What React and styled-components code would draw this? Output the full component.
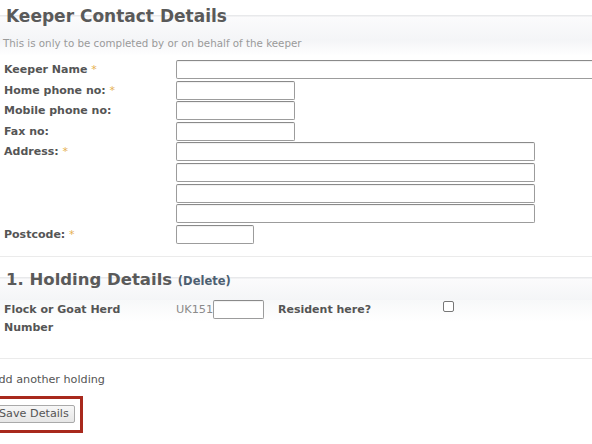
import React from 'react'
import styled, { createGlobalStyle } from 'styled-components'

const GlobalStyle = createGlobalStyle`
  html, body {
    margin: 0;
    padding: 0;
    background: #fff;
    overflow: hidden;
  }
  body {
    font-family: "DejaVu Sans", Verdana, sans-serif;
    color: #555;
  }
`

const Page = styled.div`
  width: 592px;
  height: 444px;
  overflow: hidden;
`

const SectionHead = styled.div`
  padding: 4px 0 0 0;
  height: 56px;
  box-sizing: border-box;
  background: linear-gradient(
    to bottom,
    #fff 0,
    #fff 15px,
    #e8e9eb 15px,
    #e8e9eb 16px,
    #fbfbfc 17px,
    #f4f5f7 40px,
    #fff 56px
  );
`

const Title = styled.h2`
  margin: 0 0 0 6px;
  font-size: ${(p) => p.$size || 17}px;
  line-height: 24px;
  font-weight: bold;
  color: #5a5a5a;
  span.small {
    font-size: 11.5px;
    color: #4d5f72;
  }
`

const Note = styled.p`
  margin: 8px 0 0 3px;
  font-size: 10.3px;
  line-height: 14px;
  color: #9a9a9a;
`

const Form = styled.div`
  display: grid;
  grid-template-columns: 176px 1fr;
  row-gap: 1.6px;
  margin-top: 4px;
`

const Label = styled.label`
  padding-left: 4px;
  font-size: 11px;
  line-height: 19px;
  font-weight: bold;
  color: #555;
`

const Req = styled.span`
  color: #e6b04f;
  font-weight: normal;
`

const Stack = styled.div`
  display: flex;
  flex-direction: column;
  gap: 1.6px;
`

const Input = styled.input`
  box-sizing: border-box;
  display: block;
  width: ${(p) => p.$w}px;
  height: 19px;
  margin: 0;
  padding: 1px 3px;
  border: 1px solid #9c9c9c;
  border-top-color: #8a8a8a;
  border-radius: 2px;
  background: #fff;
  box-shadow: inset 0 1px 1px rgba(0, 0, 0, 0.06);
  font-family: inherit;
  font-size: 11px;
`

const Divider = styled.div`
  height: 1px;
  background: #ebebeb;
  margin: ${(p) => p.$m};
`

const HoldingHead = styled.div`
  height: 32px;
  background: linear-gradient(
    to bottom,
    #fff 0,
    #fff 9px,
    #e8e9eb 9px,
    #e8e9eb 10px,
    #fbfbfc 11px,
    #f4f5f7 32px
  );
`

const HoldingRow = styled.div`
  display: grid;
  grid-template-columns: 176px 98px 169px 20px;
  align-items: start;
  height: 58px;
  background: linear-gradient(to bottom, #f7f8f9 0, #fff 22px);
`

const WrapLabel = styled(Label)`
  line-height: 18px;
  padding-top: 1px;
  width: 140px;
`

const Prefix = styled.div`
  display: flex;
  align-items: center;
  font-size: 11.3px;
  color: #8a8a8a;
`

const Checkbox = styled.span`
  display: block;
  width: 11px;
  height: 11px;
  margin-top: 1px;
  box-sizing: border-box;
  border: 1px solid #777;
  border-radius: 2px;
  background: #fff;
`

const AddLink = styled.a`
  display: block;
  margin: 14px 0 0 -9px;
  font-size: 11.2px;
  line-height: 14px;
  color: #555;
  text-decoration: none;
`

const Highlight = styled.div`
  display: inline-block;
  margin: 9px 0 0 -15px;
  padding: 6px 5px 7px 5px;
  border: 3px solid #a8291d;
`

const Button = styled.button`
  display: block;
  height: 18px;
  margin: 0;
  padding: 0 5px;
  border: 1px solid #a9a9a9;
  border-radius: 2px;
  background: linear-gradient(to bottom, #f7f7f7, #e6e6e6);
  font-family: inherit;
  font-size: 11.2px;
  color: #555;
`

const Star = () => <Req>*</Req>

export default function App() {
  return (
    <Page>
      <GlobalStyle />
      <SectionHead>
        <Title>Keeper Contact Details</Title>
        <Note>This is only to be completed by or on behalf of the keeper</Note>
      </SectionHead>
      <Form>
        <Label>
          Keeper Name <Star />
        </Label>
        <Input $w={440} />
        <Label>
          Home phone no: <Star />
        </Label>
        <Input $w={119} />
        <Label>Mobile phone no:</Label>
        <Input $w={119} />
        <Label>Fax no:</Label>
        <Input $w={119} />
        <Label>
          Address: <Star />
        </Label>
        <Stack>
          <Input $w={359} />
          <Input $w={359} />
          <Input $w={359} />
          <Input $w={359} />
        </Stack>
        <Label>
          Postcode: <Star />
        </Label>
        <Input $w={78} />
      </Form>
      <Divider $m="12px 0 11px 0" />
      <HoldingHead>
        <Title $size={16.5}>
          1. Holding Details <span className="small">(Delete)</span>
        </Title>
      </HoldingHead>
      <HoldingRow>
        <WrapLabel>Flock or Goat Herd Number</WrapLabel>
        <Prefix>
          UK151
          <Input $w={51} />
        </Prefix>
        <WrapLabel>Resident here?</WrapLabel>
        <Checkbox />
      </HoldingRow>
      <Divider $m="0" />
      <AddLink href="#">Add another holding</AddLink>
      <Highlight>
        <Button>Save Details</Button>
      </Highlight>
    </Page>
  )
}
